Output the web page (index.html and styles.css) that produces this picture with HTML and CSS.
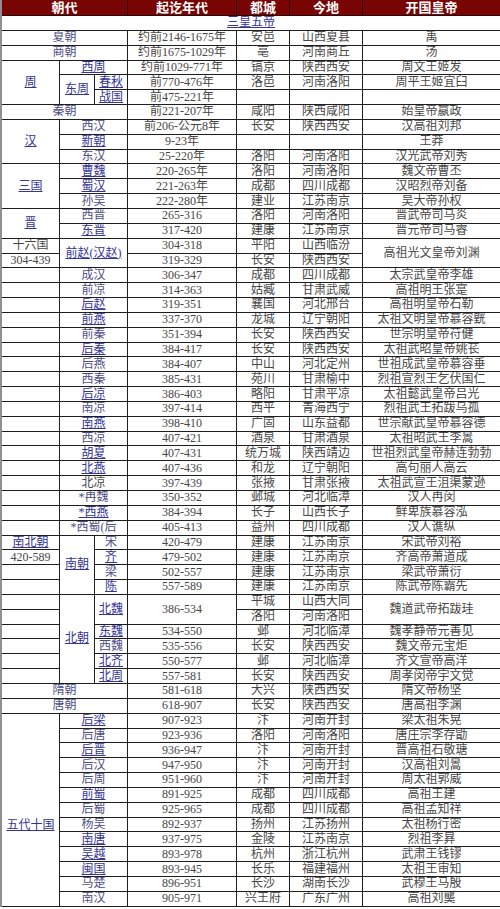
FILE: index.html
```html
<!DOCTYPE html>
<html lang="zh-CN">
<head>
<meta charset="utf-8">
<title>中国历代朝代表</title>
<link rel="stylesheet" href="styles.css">
</head>
<body>
<div class="wrap">
<table class="t">
<colgroup><col class="w1"><col class="w2"><col class="w3"><col class="w4"><col class="w5"><col class="w6"><col class="w7"></colgroup>
<thead>
<tr class="hd"><th colspan="3">朝代</th><th>起讫年代</th><th>都城</th><th>今地</th><th class="last">开国皇帝</th></tr>
</thead>
<tbody>
<tr><td colspan="7"><a class="u">三皇五帝</a></td></tr>
<tr><td colspan="3"><span class="n">夏朝</span></td><td>约前2146-1675年</td><td>安邑</td><td>山西夏县</td><td>禹</td></tr>
<tr><td colspan="3"><span class="n">商朝</span></td><td>约前1675-1029年</td><td>亳</td><td>河南商丘</td><td>汤</td></tr>
<tr><td rowspan="3"><a class="u">周</a></td><td colspan="2"><a class="u">西周</a></td><td>约前1029-771年</td><td>镐京</td><td>陕西西安</td><td>周文王姬发</td></tr>
<tr><td rowspan="2"><a class="u">东周</a></td><td><a class="u">春秋</a></td><td>前770-476年</td><td>洛邑</td><td>河南洛阳</td><td>周平王姬宜臼</td></tr>
<tr><td><a class="u">战国</a></td><td>前475-221年</td><td></td><td></td><td></td></tr>
<tr><td colspan="3"><span class="n">秦朝</span></td><td>前221-207年</td><td>咸阳</td><td>陕西咸阳</td><td>始皇帝嬴政</td></tr>
<tr><td rowspan="3"><a class="u">汉</a></td><td colspan="2"><span class="n">西汉</span></td><td>前206-公元8年</td><td>长安</td><td>陕西西安</td><td>汉高祖刘邦</td></tr>
<tr><td colspan="2"><a class="u">新朝</a></td><td>9-23年</td><td></td><td></td><td>王莽</td></tr>
<tr><td colspan="2"><span class="n">东汉</span></td><td>25-220年</td><td>洛阳</td><td>河南洛阳</td><td>汉光武帝刘秀</td></tr>
<tr><td rowspan="3"><a class="u">三国</a></td><td colspan="2"><a class="u">曹魏</a></td><td>220-265年</td><td>洛阳</td><td>河南洛阳</td><td>魏文帝曹丕</td></tr>
<tr><td colspan="2"><a class="u">蜀汉</a></td><td>221-263年</td><td>成都</td><td>四川成都</td><td>汉昭烈帝刘备</td></tr>
<tr><td colspan="2"><span class="n">孙吴</span></td><td>222-280年</td><td>建业</td><td>江苏南京</td><td>吴大帝孙权</td></tr>
<tr><td rowspan="2"><a class="u">晋</a></td><td colspan="2"><span class="n">西晋</span></td><td>265-316</td><td>洛阳</td><td>河南洛阳</td><td>晋武帝司马炎</td></tr>
<tr><td colspan="2"><a class="u">东晋</a></td><td>317-420</td><td>建康</td><td>江苏南京</td><td>晋元帝司马睿</td></tr>
<tr><td>十六国</td><td colspan="2" rowspan="2"><a class="u">前赵(汉赵)</a></td><td>304-318</td><td>平阳</td><td>山西临汾</td><td rowspan="2">高祖光文皇帝刘渊</td></tr>
<tr><td>304-439</td><td>319-329</td><td>长安</td><td>陕西西安</td></tr>
<tr><td></td><td colspan="2"><span class="n">成汉</span></td><td>306-347</td><td>成都</td><td>四川成都</td><td>太宗武皇帝李雄</td></tr>
<tr><td></td><td colspan="2"><span class="n">前凉</span></td><td>314-363</td><td>姑臧</td><td>甘肃武威</td><td>高祖明王张寔</td></tr>
<tr><td></td><td colspan="2"><a class="u">后赵</a></td><td>319-351</td><td>襄国</td><td>河北邢台</td><td>高祖明皇帝石勒</td></tr>
<tr><td></td><td colspan="2"><a class="u">前燕</a></td><td>337-370</td><td>龙城</td><td>辽宁朝阳</td><td>太祖文明皇帝慕容皝</td></tr>
<tr><td></td><td colspan="2"><span class="n">前秦</span></td><td>351-394</td><td>长安</td><td>陕西西安</td><td>世宗明皇帝苻健</td></tr>
<tr><td></td><td colspan="2"><a class="u">后秦</a></td><td>384-417</td><td>长安</td><td>陕西西安</td><td>太祖武昭皇帝姚苌</td></tr>
<tr><td></td><td colspan="2"><span class="n">后燕</span></td><td>384-407</td><td>中山</td><td>河北定州</td><td>世祖成武皇帝慕容垂</td></tr>
<tr><td></td><td colspan="2"><span class="n">西秦</span></td><td>385-431</td><td>苑川</td><td>甘肃榆中</td><td>烈祖宣烈王乞伏国仁</td></tr>
<tr><td></td><td colspan="2"><a class="u">后凉</a></td><td>386-403</td><td>略阳</td><td>甘肃平凉</td><td>太祖懿武皇帝吕光</td></tr>
<tr><td></td><td colspan="2"><span class="n">南凉</span></td><td>397-414</td><td>西平</td><td>青海西宁</td><td>烈祖武王拓跋乌孤</td></tr>
<tr><td></td><td colspan="2"><a class="u">南燕</a></td><td>398-410</td><td>广固</td><td>山东益都</td><td>世宗献武皇帝慕容德</td></tr>
<tr><td></td><td colspan="2"><span class="n">西凉</span></td><td>407-421</td><td>酒泉</td><td>甘肃酒泉</td><td>太祖昭武王李暠</td></tr>
<tr><td></td><td colspan="2"><a class="u">胡夏</a></td><td>407-431</td><td>统万城</td><td>陕西靖边</td><td>世祖烈武皇帝赫连勃勃</td></tr>
<tr><td></td><td colspan="2"><a class="u">北燕</a></td><td>407-436</td><td>和龙</td><td>辽宁朝阳</td><td>高句丽人高云</td></tr>
<tr><td></td><td colspan="2">北凉</td><td>397-439</td><td>张掖</td><td>甘肃张掖</td><td>太祖武宣王沮渠蒙逊</td></tr>
<tr><td></td><td colspan="2"><span class="n">*冉魏</span></td><td>350-352</td><td>邺城</td><td>河北临漳</td><td>汉人冉闵</td></tr>
<tr><td></td><td colspan="2"><a class="u">*西燕</a></td><td>384-394</td><td>长子</td><td>山西长子</td><td>鲜卑族慕容泓</td></tr>
<tr><td></td><td colspan="2"><span class="n">*西蜀(后</span></td><td>405-413</td><td>益州</td><td>四川成都</td><td>汉人谯纵</td></tr>
<tr><td><a class="u">南北朝</a></td><td rowspan="4"><a class="u">南朝</a></td><td><span class="n">宋</span></td><td>420-479</td><td>建康</td><td>江苏南京</td><td>宋武帝刘裕</td></tr>
<tr><td>420-589</td><td><a class="u">齐</a></td><td>479-502</td><td>建康</td><td>江苏南京</td><td>齐高帝萧道成</td></tr>
<tr><td></td><td><span class="n">梁</span></td><td>502-557</td><td>建康</td><td>江苏南京</td><td>梁武帝萧衍</td></tr>
<tr><td></td><td><a class="u">陈</a></td><td>557-589</td><td>建康</td><td>江苏南京</td><td>陈武帝陈霸先</td></tr>
<tr><td></td><td rowspan="6"><a class="u">北朝</a></td><td rowspan="2"><a class="u">北魏</a></td><td rowspan="2">386-534</td><td>平城</td><td>山西大同</td><td rowspan="2">魏道武帝拓跋珪</td></tr>
<tr><td></td><td>洛阳</td><td>河南洛阳</td></tr>
<tr><td></td><td><a class="u">东魏</a></td><td>534-550</td><td>邺</td><td>河北临漳</td><td>魏孝静帝元善见</td></tr>
<tr><td></td><td><span class="n">西魏</span></td><td>535-556</td><td>长安</td><td>陕西西安</td><td>魏文帝元宝炬</td></tr>
<tr><td></td><td><a class="u">北齐</a></td><td>550-577</td><td>邺</td><td>河北临漳</td><td>齐文宣帝高洋</td></tr>
<tr><td></td><td><a class="u">北周</a></td><td>557-581</td><td>长安</td><td>陕西西安</td><td>周孝闵帝宇文觉</td></tr>
<tr><td colspan="3"><span class="n">隋朝</span></td><td>581-618</td><td>大兴</td><td>陕西西安</td><td>隋文帝杨坚</td></tr>
<tr><td colspan="3"><span class="n">唐朝</span></td><td>618-907</td><td>长安</td><td>陕西西安</td><td>唐高祖李渊</td></tr>
<tr><td rowspan="13" class="wd"><a class="u">五代十国</a></td><td colspan="2"><a class="u">后梁</a></td><td>907-923</td><td>汴</td><td>河南开封</td><td>梁太祖朱晃</td></tr>
<tr><td colspan="2"><span class="n">后唐</span></td><td>923-936</td><td>洛阳</td><td>河南洛阳</td><td>唐庄宗李存勖</td></tr>
<tr><td colspan="2"><a class="u">后晋</a></td><td>936-947</td><td>汴</td><td>河南开封</td><td>晋高祖石敬瑭</td></tr>
<tr><td colspan="2"><span class="n">后汉</span></td><td>947-950</td><td>汴</td><td>河南开封</td><td>汉高祖刘暠</td></tr>
<tr><td colspan="2"><span class="n">后周</span></td><td>951-960</td><td>汴</td><td>河南开封</td><td>周太祖郭威</td></tr>
<tr><td colspan="2"><a class="u">前蜀</a></td><td>891-925</td><td>成都</td><td>四川成都</td><td>高祖王建</td></tr>
<tr><td colspan="2"><span class="n">后蜀</span></td><td>925-965</td><td>成都</td><td>四川成都</td><td>高祖孟知祥</td></tr>
<tr><td colspan="2"><span class="n">杨吴</span></td><td>892-937</td><td>扬州</td><td>江苏扬州</td><td>太祖杨行密</td></tr>
<tr><td colspan="2"><a class="u">南唐</a></td><td>937-975</td><td>金陵</td><td>江苏南京</td><td>烈祖李昪</td></tr>
<tr><td colspan="2"><a class="u">吴越</a></td><td>893-978</td><td>杭州</td><td>浙江杭州</td><td>武肃王钱镠</td></tr>
<tr><td colspan="2"><a class="u">闽国</a></td><td>893-945</td><td>长乐</td><td>福建福州</td><td>太祖王审知</td></tr>
<tr><td colspan="2"><span class="n">马楚</span></td><td>896-951</td><td>长沙</td><td>湖南长沙</td><td>武穆王马殷</td></tr>
<tr><td colspan="2"><span class="n">南汉</span></td><td>905-971</td><td>兴王府</td><td>广东广州</td><td>高祖刘龑</td></tr>
</tbody>
</table>
</div>
</body>
</html>
```
FILE: styles.css
```css
html, body {
  margin: 0;
  padding: 0;
  background: #ffffff;
}

.wrap {
  width: 498px;
  overflow: hidden;
  border-left: 2px solid #8f8f8f;
}

.t {
  width: 499px;
  table-layout: fixed;
  border-collapse: separate;
  border-spacing: 0;
  font-family: "Liberation Serif", "Noto Sans CJK SC", serif;
  font-size: 12px;
  color: #474747;
}

.w1 { width: 58px; }
.w2 { width: 35px; }
.w3 { width: 33px; }
.w4 { width: 109px; }
.w5 { width: 53px; }
.w6 { width: 73px; }
.w7 { width: 138px; }

.t tr {
  height: 14.85px;
}

.t td {
  padding: 0;
  border-right: 1px solid #1e1e1e;
  border-bottom: 1px solid #1e1e1e;
  text-align: center;
  vertical-align: middle;
  white-space: nowrap;
  overflow: hidden;
  line-height: 13px;
}

.t td.wd {
  padding-top: 31px;
}

.t .hd {
  height: 16px;
}

.t th {
  padding: 0;
  background: #780404;
  color: #ffffff;
  font-family: "Liberation Sans", "Noto Sans CJK SC", sans-serif;
  font-weight: 700;
  font-size: 13px;
  line-height: 15px;
  text-align: center;
  border-right: 1px solid #2a0000;
  border-bottom: 1px solid #2a0000;
}

.u {
  color: #34349a;
  text-decoration: underline;
  text-underline-offset: 1px;
}

.n {
  color: #4d4d86;
}
```
